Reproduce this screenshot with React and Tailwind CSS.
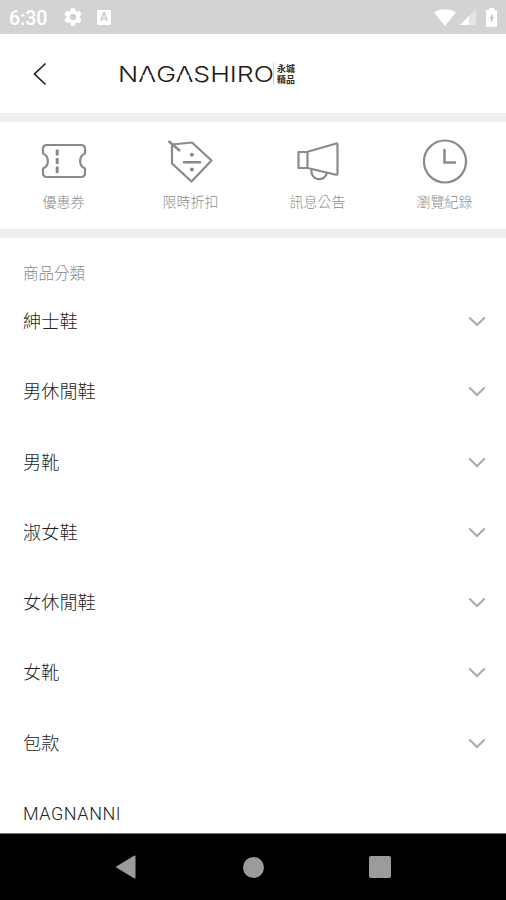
const shortcuts = [
  { label: "優惠券", Icon: CouponIcon },
  { label: "限時折扣", Icon: DiscountIcon },
  { label: "訊息公告", Icon: MegaphoneIcon },
  { label: "瀏覽紀錄", Icon: ClockIcon },
];

const categories = [
  { name: "紳士鞋", expandable: true },
  { name: "男休閒鞋", expandable: true },
  { name: "男靴", expandable: true },
  { name: "淑女鞋", expandable: true },
  { name: "女休閒鞋", expandable: true },
  { name: "女靴", expandable: true },
  { name: "包款", expandable: true },
  { name: "MAGNANNI", expandable: false },
];

const iconProps = {
  width: 48,
  height: 48,
  viewBox: "0 0 48 48",
  fill: "none",
  stroke: "#8a8a8a",
  strokeWidth: 2.2,
  strokeLinejoin: "round",
};

function CouponIcon() {
  return (
    <svg {...iconProps}>
      <path d="M7 8H41Q45 8 45 12V16.500A8.200 8.200 0 0 0 45 31.500V36Q45 40 41 40H7Q3 40 3 36V31.500A8.200 8.200 0 0 0 3 16.500V12Q3 8 7 8Z" />
      <path d="M17.200 12.500V18.500M17.200 21V27M17.200 29.500V36" strokeWidth="3" />
    </svg>
  );
}

function DiscountIcon() {
  return (
    <svg {...iconProps}>
      <path d="M5 7.500L25 5.500L44.500 23.500L24.500 44.500L5 26.500Z" />
      <path d="M1.500 4L13 14M16 25.200H34" strokeWidth="2.500" />
      <circle cx="24.900" cy="17.800" r="2" fill="#8a8a8a" stroke="none" />
      <circle cx="24.900" cy="32.500" r="2" fill="#8a8a8a" stroke="none" />
    </svg>
  );
}

function MegaphoneIcon() {
  return (
    <svg {...iconProps}>
      <path d="M4.500 15H13.500V31H4.500ZM13.500 14.800L42.200 6.500Q43.500 6.200 43.500 7.500V36.500Q43.500 38 42 37.700L13.500 31" />
      <path d="M17.500 32.500A7.800 7.800 0 0 0 33 36" />
    </svg>
  );
}

function ClockIcon() {
  return (
    <svg {...iconProps}>
      <circle cx="24" cy="24.500" r="21" />
      <path d="M23.500 12V25.500H35" strokeWidth="2.500" strokeLinejoin="miter" />
    </svg>
  );
}

function StatusBar() {
  return (
    <div className="flex h-[34px] items-center bg-[#d3d3d3] pr-2 pl-[9px] text-white">
      <span className="w-[53px] pt-[3px] font-[Roboto,sans-serif] text-[19.5px] leading-none font-medium">6:30</span>
      <svg width="22" height="22" viewBox="0 0 24 24" fill="currentColor">
        <path d="M19.140 12.940c.04-.3.060-.61.060-.94s-.02-.64-.07-.94l2.030-1.580a.49.49 0 0 0 .12-.61l-1.920-3.320a.49.49 0 0 0-.59-.22l-2.390.96a7 7 0 0 0-1.620-.94l-.36-2.540a.48.48 0 0 0-.48-.41h-3.840a.48.48 0 0 0-.47.41l-.36 2.540a7.300 7.300 0 0 0-1.620.94l-2.390-.96a.48.48 0 0 0-.59.22L2.740 8.870a.48.48 0 0 0 .12.61l2.030 1.580a6 6 0 0 0 0 1.880l-2.030 1.580a.49.49 0 0 0-.12.61l1.920 3.320c.12.220.37.290.59.220l2.390-.96c.5.380 1.030.7 1.620.94l.36 2.540c.05.240.24.410.48.410h3.840c.24 0 .44-.17.470-.41l.36-2.540a7 7 0 0 0 1.620-.94l2.390.96c.22.080.47 0 .59-.22l1.920-3.320a.48.48 0 0 0-.12-.61zM12 15.600a3.600 3.600 0 1 1 0-7.200 3.600 3.600 0 0 1 0 7.200z" />
      </svg>
      <span className="ml-[13px] flex h-[15px] w-[14px] items-center justify-center rounded-[1px] bg-white font-[Roboto,sans-serif] text-[12px] leading-none font-medium text-[#c9c9c9]">
        A
      </span>
      <svg className="ml-auto" width="22" height="17" viewBox="0 0 22 17" fill="currentColor">
        <path d="M0 3.500C6-1 16-1 22 3.500L11 17Z" />
      </svg>
      <svg className="ml-[4px]" width="16" height="16" viewBox="0 0 16 16" fill="currentColor">
        <path d="M16 0V16H0Z" opacity=".4" />
        <path d="M9 7V16H0Z" />
      </svg>
      <svg className="mr-[1px] ml-[10px]" width="11" height="19" viewBox="0 0 11 19">
        <path d="M3 0H8V2H10Q11 2 11 3V18Q11 19 10 19H1Q0 19 0 18V3Q0 2 1 2H3Z" fill="#fff" />
        <path d="M6.500 5L3.500 10.500H5V15L8 9H6.500Z" fill="#c4c4c4" />
      </svg>
    </div>
  );
}

// The wordmark's A has no crossbar
function OpenA() {
  return (
    <span className="relative">
      A
      <span className="absolute bottom-[8px] left-[calc(50%-0.2px)] h-[4px] w-[7px] -translate-x-1/2 bg-white" />
    </span>
  );
}

function Logo() {
  return (
    <div className="flex items-center">
      <div className="w-[155px]">
        <div className="origin-left scale-x-[1.21] font-[Inter,sans-serif] text-[22px] leading-[26px] font-light whitespace-nowrap text-[#231815]">
          N<OpenA />G<OpenA />SHIRO
        </div>
      </div>
      <div className="h-[22px] w-px bg-[#d5d0d0]" />
      <div className="ml-[3px] w-[19px] font-['Noto_Sans_CJK_TC',sans-serif] text-[9px] leading-[11px] font-bold break-all text-[#3a2a26]">
        永城精品
      </div>
    </div>
  );
}

function Header() {
  return (
    <header className="flex h-[79px] items-center pl-[33px]">
      <svg className="mr-[71px]" width="14" height="24" viewBox="0 0 14 24" fill="none" stroke="#222" strokeWidth="1.700">
        <path d="M12.500 1.500L1.500 12L12.500 22.500" />
      </svg>
      <Logo />
    </header>
  );
}

function NavBar() {
  return (
    <nav className="flex h-[67px] items-center border-t border-[#6f7572] bg-black">
      <svg className="ml-[115px]" width="21" height="24" viewBox="0 0 21 24" fill="#9b9b9b">
        <path d="M0.500 12L19 .8Q20.500 0 20.500 1.500V22.500Q20.500 24 19 23.200Z" />
      </svg>
      <span className="ml-[107px] h-[21px] w-[21px] rounded-full bg-[#9b9b9b]" />
      <span className="ml-[105px] h-[22px] w-[22px] rounded-[2px] bg-[#9b9b9b]" />
    </nav>
  );
}

export default function App() {
  return (
    <div className="flex h-[900px] w-[506px] flex-col overflow-hidden bg-white font-[Roboto,'Noto_Sans_CJK_TC',sans-serif]">
      <StatusBar />
      <Header />
      <section className="grid h-[125px] grid-cols-[127px_127px_127px_127px] border-t-[9px] border-b-[9px] border-[#eee]">
        {shortcuts.map(({ label, Icon }) => (
          <div key={label} className="flex flex-col items-center pt-[15px]">
            <Icon />
            <span className="mt-[7px] text-[14px] leading-5 font-light text-[#8c8c8c]">{label}</span>
          </div>
        ))}
      </section>
      <main className="min-h-0 flex-1 overflow-hidden pr-[20px] pl-[23px]">
        <h2 className="mt-[24px] h-[24px] text-[15.5px] leading-6 font-light text-[#888]">商品分類</h2>
        <ul>
          {categories.map(({ name, expandable }) => (
            <li key={name} className="flex h-[70.3px] items-start justify-between pt-[24px] text-[18.2px] leading-6 text-[#222]">
              <span className={expandable ? "font-light" : "text-[18px] font-light tracking-[0.55px]"}>{name}</span>
              {expandable && (
                <svg className="mt-[6px]" width="18" height="11" viewBox="0 0 18 11" fill="none" stroke="#aaa" strokeWidth="2">
                  <path d="M1.300 1.500L9 9L16.700 1.500" />
                </svg>
              )}
            </li>
          ))}
        </ul>
      </main>
      <NavBar />
    </div>
  );
}
